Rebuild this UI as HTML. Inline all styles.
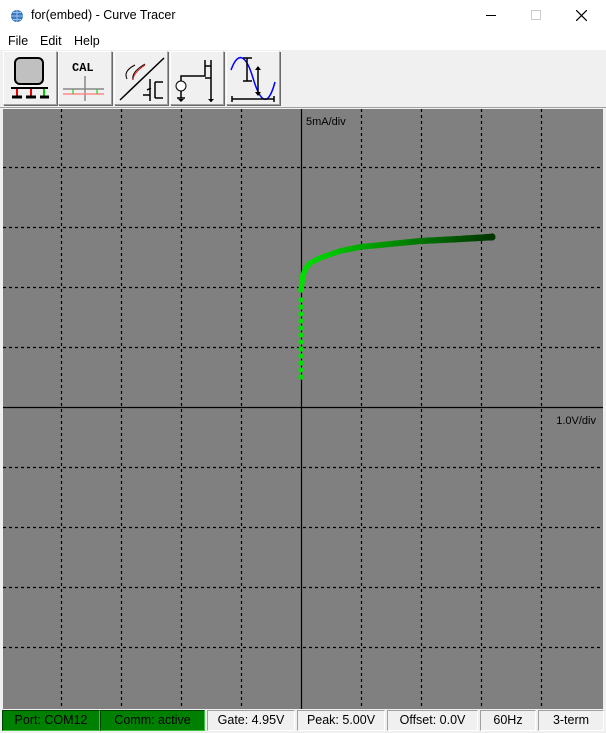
<!DOCTYPE html>
<html><head><meta charset="utf-8"><style>
*{margin:0;padding:0;box-sizing:border-box}
body{width:606px;height:733px;background:#f0f0f0;font-family:"Liberation Sans",sans-serif;position:relative;overflow:hidden}
.title{position:absolute;left:0;top:0;width:606px;height:31px;background:#fff}
.title span{position:absolute;left:31px;top:8px;font-size:12.5px;color:#000}
.menu{position:absolute;left:0;top:31px;width:606px;height:19px;background:#fff;font-size:12.5px}
.menu span{position:absolute;top:3px}
.btn{position:absolute;top:51px;width:54px;height:54px;background:#f0f0f0;border:1px solid;border-color:#fff #a0a0a0 #a0a0a0 #fff;box-shadow:1px 1px 0 #696969}
.sb{position:absolute;top:710px;height:21px;font-size:12.5px;text-align:center;line-height:19px;border:1px solid;border-color:#a0a0a0 #fff #fff #a0a0a0}
.g{background:#008000;color:#000;border-color:#004000 #40c040 #40c040 #004000}
</style></head><body>
<div class="title">
<svg style="position:absolute;left:10px;top:9px" width="14" height="14"><circle cx="7" cy="7" r="6" fill="#3a78c0"/><path d="M1 7h12M7 1v12M3 3.5h8M3 10.5h8" stroke="#9cc4ee" stroke-width="1"/></svg>
<span>for(embed) - Curve Tracer</span>
<div style="position:absolute;left:486px;top:15px;width:10px;height:1px;background:#000"></div>
<div style="position:absolute;left:531px;top:10px;width:10px;height:10px;border:1px solid #ccc"></div>
<svg style="position:absolute;left:576px;top:10px" width="11" height="11"><path d="M0 0L11 11M11 0L0 11" stroke="#000" stroke-width="1.2"/></svg>
</div>
<div class="menu"><span style="left:8px">File</span><span style="left:40px">Edit</span><span style="left:74px">Help</span></div>
<div style="position:absolute;left:0;top:50px;width:606px;height:57px;background:#f0f0f0"></div>
<div class="btn" style="left:3px"><svg width="52" height="52"><rect x="11" y="6" width="28" height="26" rx="5" fill="#c0c0c0" stroke="#000" stroke-width="2"/><path d="M7 36h37" stroke="#000" stroke-width="2"/><path d="M13 37v7M27 37v7" stroke="#e00" stroke-width="2"/><path d="M40 37v7" stroke="#0c0" stroke-width="2"/><path d="M8 45h10M22 45h10M36 45h9" stroke="#000" stroke-width="3"/></svg></div>
<div class="btn" style="left:58px"><svg width="52" height="52"><text x="13" y="19" font-family="Liberation Mono" font-weight="bold" font-size="12">CAL</text><path d="M26 24v25M4 37h41" stroke="#888" stroke-width="1.5"/><path d="M4 42h41" stroke="#f88" stroke-width="1.5"/><path d="M14 37v5M38 37v5" stroke="#0c0"/></svg></div>
<div class="btn" style="left:114px"><svg width="52" height="52"><path d="M5 48L49 6" stroke="#000" stroke-width="1.5"/><path d="M12 27q-4-8 8-14M18 28q-2-8 12-16" stroke="#000" fill="none"/><path d="M18 28q0-7 12-15" stroke="#e00" fill="none"/><path d="M35 27v22M40 30v16M40 30h8M40 46h8M28 43h7M32 38l4-2" stroke="#000" stroke-width="1.5" fill="none"/></svg></div>
<div class="btn" style="left:170px"><svg width="52" height="52"><circle cx="10" cy="34" r="5" fill="#fff" stroke="#000"/><path d="M10 39v7M6 46h8M10 29v-5h24V8M40 8v42M34 14h6M34 26h6" stroke="#000" stroke-width="1.5" fill="none"/><path d="M7 47l3 3 3-3M37 47l3 3 3-3" fill="#000"/></svg></div>
<div class="btn" style="left:226px"><svg width="52" height="52"><path d="M4 18C12 -4 20 6 26 26S40 60 48 30" stroke="#00f" stroke-width="1.5" fill="none"/><path d="M16 6h9M20 6v23M16 29h9M31 15v28M5 47h42M5 44v6M47 44v6" stroke="#000" stroke-width="1.5"/><path d="M28 18l3-4 3 4M28 40l3 4 3-4" fill="#000"/></svg></div>
<div style="position:absolute;left:0;top:107px;width:606px;height:1px;background:#a0a0a0"></div>
<svg style="position:absolute;left:3px;top:109px" width="600" height="600">
<rect width="600" height="600" fill="#808080"/>
<g stroke="#000" stroke-dasharray="3,3" stroke-width="1.2">
<path d="M58.5 0V600M118.5 0V600M178.5 0V600M238.5 0V600M358.5 0V600M418.5 0V600M478.5 0V600M538.5 0V600"/>
<path d="M0 58.5H600M0 118.5H600M0 178.5H600M0 238.5H600M0 358.5H600M0 418.5H600M0 478.5H600M0 538.5H600"/>
</g>
<path d="M298.5 0V600M0 298.5H600" stroke="#000" stroke-width="1.2"/>
<text x="303" y="16" font-size="11" font-family="Liberation Sans">5mA/div</text>
<text x="593" y="315" font-size="11" font-family="Liberation Sans" text-anchor="end">1.0V/div</text>
<g id="pts"></g>
</svg>
<script>
var g=document.getElementById('pts'),s='';
for(var y=268;y>=185;y-=7){s+='<circle cx="298" cy="'+y+'" r="2.7" fill="#00e000"/>';}
var P=[[298,181],[300,166],[303,159],[307,154],[317,149],[337,142],[357,138],[377,136],[397,134],[417,132],[437,131],[457,130],[489,128]];
var N=P.length-1;
for(var i=0;i<N;i++){var a=P[i],b=P[i+1];var d=Math.hypot(b[0]-a[0],b[1]-a[1]);var n=Math.max(1,Math.round(d/2.5));
for(var k=0;k<n;k++){var u=k/n;var x=a[0]+(b[0]-a[0])*u,yy=a[1]+(b[1]-a[1])*u;var t=(x-298)/191;
var c=Math.round(224-170*t);s+='<circle cx="'+x.toFixed(1)+'" cy="'+yy.toFixed(1)+'" r="'+(2.8+0.6*t).toFixed(2)+'" fill="rgb(0,'+c+',0)"/>';}}
s+='<circle cx="489" cy="128" r="3.6" fill="rgb(0,54,0)"/>';
g.innerHTML=s;
</script>
<div class="sb g" style="left:2px;width:98px">Port: COM12</div>
<div class="sb g" style="left:100px;width:105px">Comm: active</div>
<div class="sb" style="left:207px;width:88px">Gate: 4.95V</div>
<div class="sb" style="left:297px;width:88px">Peak: 5.00V</div>
<div class="sb" style="left:387px;width:91px">Offset: 0.0V</div>
<div class="sb" style="left:480px;width:56px">60Hz</div>
<div class="sb" style="left:538px;width:66px">3-term</div>
</body></html>
